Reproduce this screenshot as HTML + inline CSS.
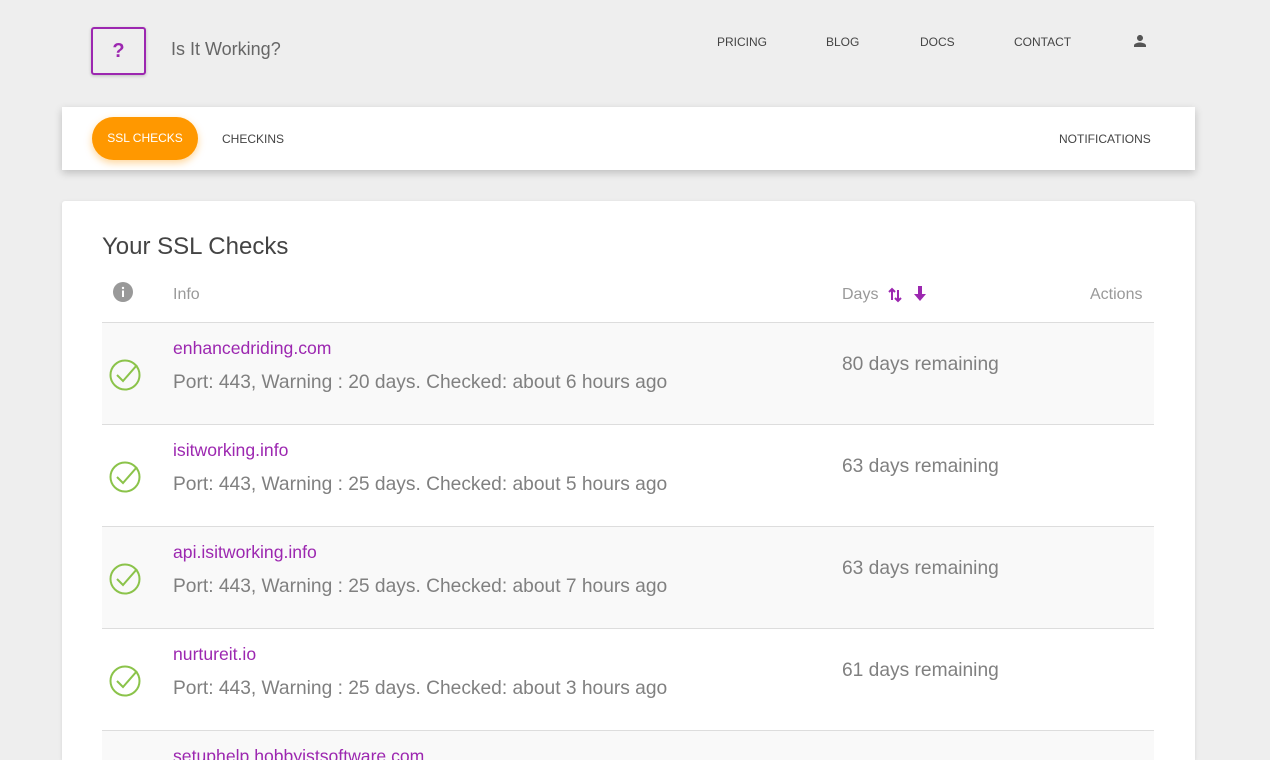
<!DOCTYPE html>
<html><head><style>
*{margin:0;padding:0;box-sizing:border-box}
html,body{width:1270px;height:760px;overflow:hidden}
body{background:#eeeeee;font-family:"Liberation Sans",sans-serif;position:relative}
.abs{position:absolute}
.logo{left:91px;top:27px;width:55px;height:48px;border:2px solid #9c27b0;border-radius:3px;color:#9c27b0;font-weight:bold;font-size:20px;text-align:center;line-height:44px;box-shadow:0 1px 3px rgba(0,0,0,.2)}
.brand{left:171px;top:39px;font-size:18px;color:#666}
.nav{top:35px;font-size:12px;color:#444;font-weight:500}
.bar{left:62px;top:107px;width:1133px;height:63px;background:#fff;box-shadow:0 3px 8px rgba(0,0,0,.2)}
.pill{left:92px;top:117px;width:106px;height:43px;background:#ff9800;border-radius:22px;color:#fff;font-size:12px;text-align:center;line-height:43px;box-shadow:0 3px 8px rgba(255,152,0,.4)}
.tab{top:132px;font-size:12px;color:#444}
.card{left:62px;top:201px;width:1133px;height:559px;background:#fff;border-radius:3px 3px 0 0;box-shadow:0 1px 4px rgba(0,0,0,.1)}
h1{position:absolute;left:102px;top:233px;font-size:24px;font-weight:normal;color:#444}
.hd{top:286px;font-size:16px;color:#999}
.row{left:102px;width:1052px;height:102px;border-top:1px solid #ddd}
.row.o{background:#f9f9f9}
.dom{position:absolute;left:71px;top:15px;font-size:17.6px;color:#9c27b0}
.det{position:absolute;left:71px;top:49px;font-size:19.2px;color:#808080}
.days{position:absolute;left:740px;top:31px;font-size:19.2px;color:#808080}
.ck{position:absolute;left:7px;top:34px}
</style></head><body>
<div class="abs logo">?</div>
<div class="abs brand">Is It Working?</div>
<div class="abs nav" style="left:717px">PRICING</div>
<div class="abs nav" style="left:826px">BLOG</div>
<div class="abs nav" style="left:920px">DOCS</div>
<div class="abs nav" style="left:1014px">CONTACT</div>
<svg class="abs" style="left:1131px;top:32px" width="18" height="18" viewBox="0 0 24 24"><path fill="#555" d="M12 12c2.2 0 4-1.8 4-4s-1.8-4-4-4-4 1.8-4 4 1.8 4 4 4zm0 2c-2.7 0-8 1.3-8 4v2h16v-2c0-2.7-5.3-4-8-4z"/></svg>
<div class="abs bar"></div>
<div class="abs pill">SSL CHECKS</div>
<div class="abs tab" style="left:222px">CHECKINS</div>
<div class="abs tab" style="left:1059px">NOTIFICATIONS</div>
<div class="abs card"></div>
<h1>Your SSL Checks</h1>
<svg class="abs" style="left:113px;top:282px" width="20" height="20" viewBox="0 0 20 20"><circle cx="10" cy="10" r="10" fill="#999"/><rect x="9" y="8.5" width="2" height="6.5" fill="#fff"/><circle cx="10" cy="6" r="1.2" fill="#fff"/></svg>
<div class="abs hd" style="left:173px">Info</div>
<div class="abs hd" style="left:842px">Days</div>
<svg class="abs" style="left:887px;top:286px" width="16" height="18" viewBox="0 0 16 18"><path d="M5 14V3M2 6l3-3 3 3M11 4v11M8 12l3 3 3-3" stroke="#9c27b0" stroke-width="2" fill="none"/></svg>
<svg class="abs" style="left:913px;top:286px" width="14" height="16" viewBox="0 0 14 16"><path d="M5 0h4v8h4l-6 7-6-7h4z" fill="#9c27b0"/></svg>
<div class="abs hd" style="left:1090px">Actions</div>

<div class="abs row o" style="top:322px"><svg class="ck" width="34" height="34" viewBox="0 0 34 34"><circle cx="16" cy="18" r="14.5" fill="none" stroke="#8bc34a" stroke-width="2"/><path d="M8 18l6 6 14-16" stroke="#8bc34a" stroke-width="2" fill="none"/></svg><div class="dom">enhancedriding.com</div><div class="det">Port: 443, Warning : 20 days. Checked: about 6 hours ago</div><div class="days">80 days remaining</div></div>
<div class="abs row" style="top:424px"><svg class="ck" width="34" height="34" viewBox="0 0 34 34"><circle cx="16" cy="18" r="14.5" fill="none" stroke="#8bc34a" stroke-width="2"/><path d="M8 18l6 6 14-16" stroke="#8bc34a" stroke-width="2" fill="none"/></svg><div class="dom">isitworking.info</div><div class="det">Port: 443, Warning : 25 days. Checked: about 5 hours ago</div><div class="days">63 days remaining</div></div>
<div class="abs row o" style="top:526px"><svg class="ck" width="34" height="34" viewBox="0 0 34 34"><circle cx="16" cy="18" r="14.5" fill="none" stroke="#8bc34a" stroke-width="2"/><path d="M8 18l6 6 14-16" stroke="#8bc34a" stroke-width="2" fill="none"/></svg><div class="dom">api.isitworking.info</div><div class="det">Port: 443, Warning : 25 days. Checked: about 7 hours ago</div><div class="days">63 days remaining</div></div>
<div class="abs row" style="top:628px"><svg class="ck" width="34" height="34" viewBox="0 0 34 34"><circle cx="16" cy="18" r="14.5" fill="none" stroke="#8bc34a" stroke-width="2"/><path d="M8 18l6 6 14-16" stroke="#8bc34a" stroke-width="2" fill="none"/></svg><div class="dom">nurtureit.io</div><div class="det">Port: 443, Warning : 25 days. Checked: about 3 hours ago</div><div class="days">61 days remaining</div></div>
<div class="abs row o" style="top:730px;height:30px;overflow:hidden"><div class="dom">setuphelp.hobbyistsoftware.com</div></div>
</body></html>
